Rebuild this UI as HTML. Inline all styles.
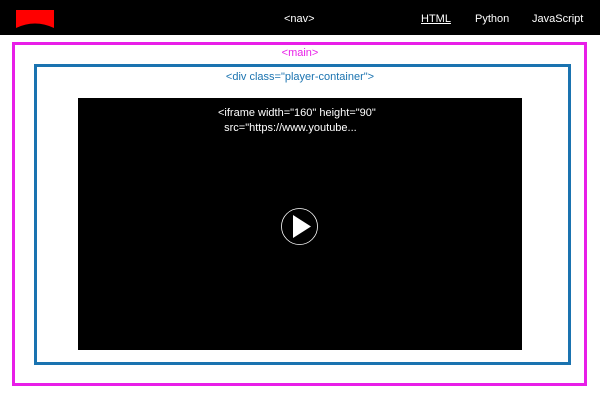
<!DOCTYPE html>
<html><head><style>
body{margin:0;width:600px;height:400px;background:#fff;font-family:"Liberation Sans",sans-serif;position:relative;overflow:hidden}
.a{position:absolute}
</style></head><body>
<div class="a" style="left:0;top:0;width:600px;height:35px;background:#000"></div>
<svg class="a" style="left:16px;top:9px" width="40" height="22"><path d="M0 1H38V19Q19 10 0 19Z" fill="#f00"/></svg>
<div class="a" style="left:284px;top:13px;color:#fff;font-size:11px">&lt;nav&gt;</div>
<div class="a" style="left:421px;top:13px;color:#fff;font-size:11px;text-decoration:underline">HTML</div>
<div class="a" style="left:475px;top:13px;color:#fff;font-size:11px">Python</div>
<div class="a" style="left:532px;top:13px;color:#fff;font-size:11px">JavaScript</div>
<div class="a" style="left:12px;top:42px;width:569px;height:338px;border:3px solid #e81ee8"></div>
<div class="a" style="left:0;width:600px;text-align:center;top:47px;color:#e81ee8;font-size:11px">&lt;main&gt;</div>
<div class="a" style="left:34px;top:64px;width:531px;height:295px;border:3px solid #1a73b0"></div>
<div class="a" style="left:0;width:600px;text-align:center;top:71px;color:#1a73b0;font-size:11px">&lt;div class="player-container"&gt;</div>
<div class="a" style="left:78px;top:98px;width:444px;height:252px;background:#000"></div>
<div class="a" style="left:218px;top:106px;color:#fff;font-size:11px;line-height:15px">&lt;iframe width="160" height="90"<br>&nbsp;&nbsp;src="https://www.youtube...</div>
<svg class="a" style="left:280px;top:207px" width="40" height="40"><circle cx="19.5" cy="19.5" r="18" fill="#000" stroke="#fff" stroke-width="0.8"/><path d="M13 8L31 19.5L13 31Z" fill="#fff"/></svg>
</body></html>
